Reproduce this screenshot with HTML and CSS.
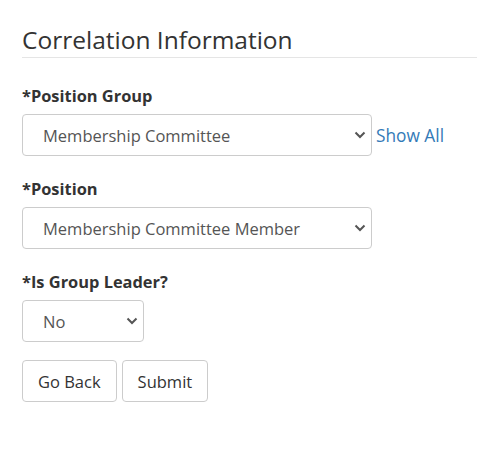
FILE: index.html
```html
<!DOCTYPE html>
<html lang="en">
<head>
<meta charset="utf-8">
<title>Correlation Information</title>
<link rel="stylesheet" href="styles.css">
</head>
<body>
<main class="page">
  <h3 class="section-title">Correlation Information</h3>
  <form class="form">
    <div class="form-group">
      <label class="form-label" for="pg">*Position Group</label>
      <div class="inline-row">
        <select id="pg" class="form-select wide">
          <option>Membership Committee</option>
        </select>
        <a class="link" href="#">Show All</a>
      </div>
    </div>
    <div class="form-group">
      <label class="form-label" for="pos">*Position</label>
      <select id="pos" class="form-select wide">
        <option>Membership Committee Member</option>
      </select>
    </div>
    <div class="form-group">
      <label class="form-label" for="lead">*Is Group Leader?</label>
      <select id="lead" class="form-select narrow">
        <option>No</option>
      </select>
    </div>
    <div class="actions">
      <button type="button" class="btn">Go Back</button>
      <button type="button" class="btn">Submit</button>
    </div>
  </form>
</main>
</body>
</html>
```
FILE: styles.css
```css
* { box-sizing: border-box; }
html, body { margin: 0; padding: 0; background: #fff; }
body {
  font-family: "Open Sans", "Noto Sans", sans-serif;
  color: #333;
}
.page {
  padding: 26px 0 0 22px;
}
.section-title {
  margin: 0;
  font-size: 24.5px;
  font-weight: 400;
  line-height: 27px;
  color: #333;
  padding-bottom: 4px;
  border-bottom: 1px solid #e5e5e5;
}
.form { margin-top: 28px; }
.form-group + .form-group { margin-top: 23px; }
.form-label {
  display: block;
  font-size: 16.4px;
  font-weight: 700;
  line-height: 20px;
  margin-bottom: 8px;
  color: #333;
}
.inline-row {
  display: flex;
  align-items: center;
  gap: 4px;
}
.form-select {
  display: block;
  height: 42px;
  padding: 0 36px 0 20px;
  font-family: inherit;
  font-size: 16.5px;
  color: #555;
  background-color: #fff;
  border: 1px solid #ccc;
  border-radius: 4px;
  -webkit-appearance: none;
  appearance: none;
  background-image: url("data:image/svg+xml;utf8,<svg xmlns='http://www.w3.org/2000/svg' width='12' height='8' viewBox='0 0 12 8'><path d='M1.5 1.5 L6 6 L10.5 1.5' fill='none' stroke='%23555' stroke-width='2'/></svg>");
  background-repeat: no-repeat;
  background-position: right 5px center;
  background-size: 12px 8px;
}
.wide { width: 350px; }
.narrow { width: 122px; }
.link {
  color: #337ab7;
  text-decoration: none;
  font-size: 17.3px;
}
.actions {
  display: flex;
  gap: 5px;
  margin-top: 18px;
}
.btn {
  height: 42px;
  padding: 0 15px;
  font-family: inherit;
  font-size: 16.5px;
  color: #333;
  background: #fff;
  border: 1px solid #ccc;
  border-radius: 4px;
}
```
